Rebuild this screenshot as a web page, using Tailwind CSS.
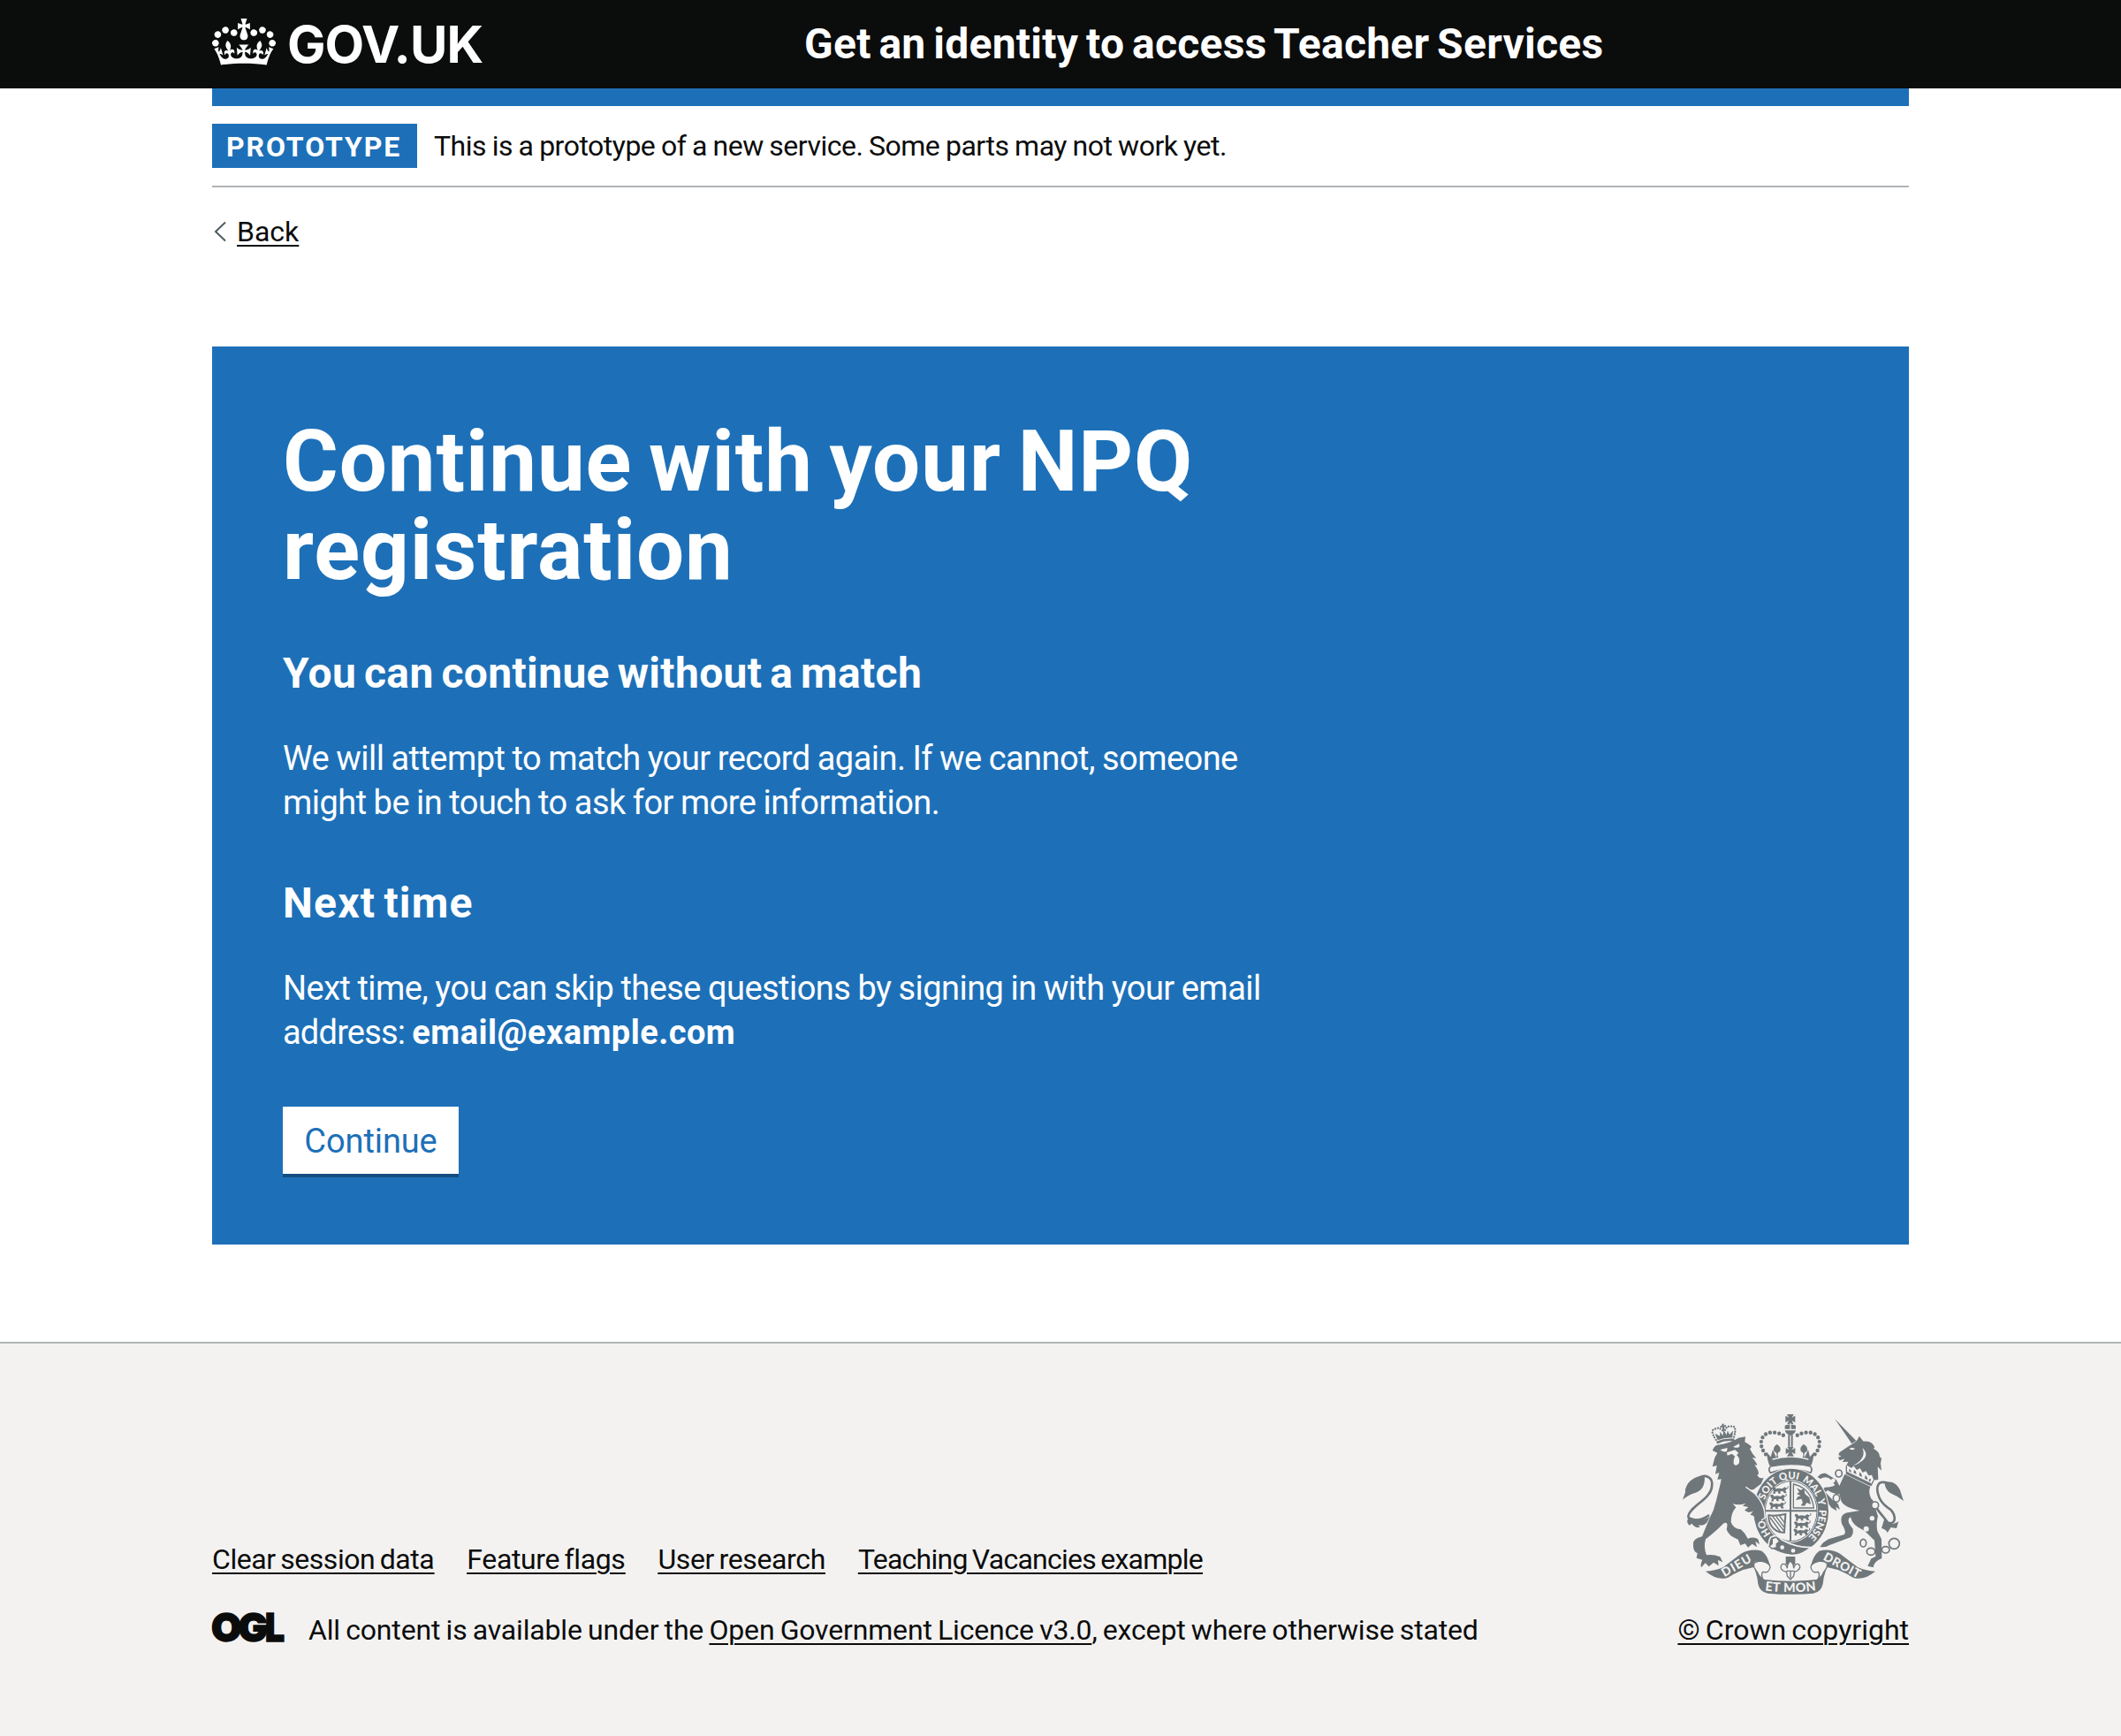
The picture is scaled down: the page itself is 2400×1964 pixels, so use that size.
<!DOCTYPE html>
<html lang="en">
<head>
<meta charset="utf-8">
<title>Get an identity to access Teacher Services</title>
<script src="https://cdn.jsdelivr.net/npm/@tailwindcss/browser@4"></script>
</head>
<body class="flex min-h-[1964px] flex-col bg-white font-[Roboto,Arial,sans-serif] text-[32px] leading-[40px] text-[#0b0c0c]">

<header class="h-[100px] bg-[#0b0c0c] text-white">
  <div class="mx-auto flex h-full w-[1920px] items-center">
    <a class="flex w-[670px] shrink-0 items-center">
      <svg class="mb-[5px] h-[53px] w-[72px]" viewBox="0 0 132 97" fill="currentColor" aria-hidden="true"><path fill-rule="evenodd" d="M25 30.2c3.5 1.5 7.7-.2 9.1-3.7 1.5-3.6-.2-7.8-3.9-9.2-3.6-1.4-7.6.3-9.1 3.9-1.4 3.5.3 7.5 3.9 9zM9 39.5c3.6 1.5 7.8-.2 9.2-3.7 1.5-3.6-.2-7.8-3.9-9.1-3.6-1.5-7.6.2-9.1 3.8-1.4 3.5.3 7.5 3.8 9zM4.4 57.2c3.5 1.5 7.7-.2 9.1-3.8 1.5-3.6-.2-7.7-3.9-9.1-3.5-1.5-7.6.3-9.1 3.8-1.4 3.5.3 7.6 3.9 9.1zm38.3-21.4c3.5 1.5 7.7-.2 9.1-3.8 1.5-3.6-.2-7.7-3.9-9.1-3.6-1.5-7.6.3-9.1 3.8-1.3 3.6.4 7.7 3.9 9.1zm64.4-5.6c-3.6 1.5-7.8-.2-9.1-3.7-1.5-3.6.2-7.8 3.8-9.2 3.6-1.4 7.7.3 9.2 3.9 1.3 3.5-.4 7.5-3.9 9zm15.9 9.3c-3.6 1.5-7.7-.2-9.1-3.7-1.5-3.6.2-7.8 3.7-9.1 3.6-1.5 7.7.2 9.2 3.8 1.5 3.5-.3 7.5-3.8 9zm4.7 17.7c-3.6 1.5-7.8-.2-9.2-3.8-1.5-3.6.2-7.7 3.9-9.1 3.6-1.5 7.7.3 9.2 3.8 1.3 3.5-.4 7.6-3.9 9.1zM89.3 35.8c-3.6 1.5-7.8-.2-9.2-3.8-1.4-3.6.2-7.7 3.9-9.1 3.6-1.5 7.7.3 9.2 3.8 1.4 3.6-.3 7.7-3.9 9.1zM69.7 17.7l8.9 4.7V9.3l-8.9 2.8c-.2-.3-.5-.6-.9-.9L72.4 0H59.6l3.5 11.2c-.3.3-.6.5-.9.9l-8.8-2.8v13.1l8.8-4.7c.3.3.6.7.9.9l-5 15.4v.1c-.2.8-.4 1.6-.4 2.4 0 4.1 3.1 7.5 7 8.1h.2c.3 0 .7.1 1 .1.4 0 .7 0 1-.1h.2c4-.6 7.1-4.1 7.1-8.1 0-.8-.1-1.7-.4-2.4V34l-5.1-15.4c.4-.2.7-.6 1-.9zM66 92.8c16.9 0 32.8 1.1 47.1 3.2 4-16.9 8.9-26.7 14-33.5l-9.6-3.4c1 4.9 1.1 7.2 0 10.2-1.5-1.4-3-4.3-4.2-8.7L108.6 76c2.8-2 5-3.2 7.5-3.3-4.4 9.4-10 11.9-13.6 11.2-4.3-.8-6.3-4.6-5.6-7.9 1-4.7 5.7-5.9 8-.5 4.3-8.7-3-11.4-7.6-8.8 7.1-7.2 7.9-13.5 2.1-21.1-8 6.1-8.1 12.3-4.5 20.8-4.7-5.4-12.1-2.5-9.5 6.2 3.4-5.2 7.9-2 7.2 3.1-.6 4.3-6.4 7.8-13.5 7.2-10.3-.9-10.9-8-11.2-13.8 2.5-.5 7.1 1.8 11 7.3L80.2 60c-4.1 4.4-8 5.3-12.3 5.4 1.4-4.4 8-11.6 8-11.6H55.5s6.4 7.2 7.9 11.6c-4.2-.1-8-1-12.3-5.4l1.4 16.4c3.9-5.5 8.5-7.7 10.9-7.3-.3 5.8-.9 12.8-11.1 13.8-7.2.6-12.9-2.9-13.5-7.2-.7-5 3.8-8.3 7.1-3.1 2.7-8.7-4.6-11.6-9.4-6.2 3.7-8.5 3.6-14.7-4.6-20.8-5.8 7.6-5 13.9 2.2 21.1-4.7-2.6-11.9.1-7.7 8.8 2.3-5.5 7.1-4.2 8.1.5.7 3.3-1.3 7.1-5.7 7.9-3.5.7-9-1.8-13.5-11.2 2.5.1 4.7 1.3 7.5 3.3l-4.7-15.4c-1.2 4.4-2.7 7.2-4.3 8.7-1.1-3-.9-5.3 0-10.2l-9.5 3.4c5 6.9 9.9 16.7 14 33.5 14.8-2.1 30.8-3.2 47.7-3.2z"/></svg>
      <span class="ml-[13px] font-[Inter,sans-serif] text-[58px] leading-[100px] font-bold tracking-[-1px]">GOV.UK</span>
    </a>
    <a class="text-[48px] leading-[100px] font-bold tracking-[0.27px] [word-spacing:-3.5px]">Get an identity to access Teacher Services</a>
  </div>
</header>

<div class="mx-auto w-[1920px]">
  <div class="h-[20px] bg-[#1d70b8]"></div>
  <div class="flex items-center border-b-2 border-[#b1b4b6] py-[20px]">
    <strong class="h-[50px] w-[232px] bg-[#1d70b8] pt-[2px] pl-[16px] leading-[48px] font-bold tracking-[1.9px] text-white">PROTOTYPE</strong>
    <span class="ml-[19px] tracking-[-0.5px] [word-spacing:-0.8px]">This is a prototype of a new service. Some parts may not work yet.</span>
  </div>
  <a class="mt-[30px] flex h-[40px] items-center">
    <svg class="ml-[2px] h-[24px] w-[14px]" viewBox="0 0 14 24" fill="none" stroke="#505a5f" stroke-width="2"><path d="M13 1.5 2 12l11 10.500"/></svg>
    <span class="ml-[12px] underline decoration-2 underline-offset-4">Back</span>
  </a>
</div>

<main class="mx-auto mt-[110px] h-[1016px] w-[1920px] bg-[#1d70b8] p-[80px] text-white">
  <h1 class="text-[96px] leading-[100px] font-bold tracking-[0.9px] [word-spacing:-6px]">Continue with your NPQ<br>registration</h1>
  <h2 class="mt-[60px] text-[48px] leading-[60px] font-bold tracking-[0.35px] [word-spacing:-3.5px]">You can continue without a match</h2>
  <p class="mt-[41px] text-[38px] leading-[50px] tracking-[-0.55px] [word-spacing:-0.8px]">We will attempt to match your record again. If we cannot, someone<br>might be in touch to ask for more information.</p>
  <h2 class="mt-[59px] text-[48px] leading-[60px] font-bold tracking-[1.2px] [word-spacing:-4px]">Next time</h2>
  <p class="mt-[41px] text-[38px] leading-[50px] tracking-[-0.55px] [word-spacing:-0.8px]">Next time, you can skip these questions by signing in with your email<br><span class="tracking-[-0.8px]">address:</span> <strong class="font-bold tracking-[0.45px]">email@example.com</strong></p>
  <button class="mt-[59px] block h-[76px] w-[199px] bg-white pt-[3px] text-center text-[38px] leading-[73px] tracking-[-0.1px] text-[#1d70b8] shadow-[0_4px_0_#144e81]">Continue</button>
</main>

<footer class="mt-[110px] grow border-t-2 border-[#b1b4b6] bg-[#f3f2f1] pt-[80px]">
  <div class="mx-auto flex w-[1920px] items-end justify-between">
    <div class="flex flex-col gap-[40px]">
      <nav class="flex gap-[37px] underline decoration-2 underline-offset-4 [word-spacing:-2px]">
        <a class="tracking-[-0.44px]">Clear session data</a>
        <a class="tracking-[-0.38px]">Feature flags</a>
        <a class="tracking-[-0.38px]">User research</a>
        <a class="tracking-[-0.75px]">Teaching Vacancies example</a>
      </nav>
      <div class="flex h-[40px] items-center">
        <svg class="mb-[6px] h-[34px] w-[82px] overflow-visible" viewBox="0 0 82 34" fill="#0b0c0c" stroke="#0b0c0c" stroke-width="1.500" font-family="Inter, sans-serif" font-weight="900" font-size="44.500"><text x="-1" y="33">O</text><text x="29.500" y="33">G</text><text x="60" y="33" textLength="22" lengthAdjust="spacingAndGlyphs">L</text></svg>
        <span class="ml-[27px] tracking-[-0.17px] [word-spacing:-1.5px]">All content is available under the <a class="underline decoration-2 underline-offset-4">Open Government Licence v3.0</a>, except where otherwise stated</span>
      </div>
    </div>
    <div class="flex flex-col items-end gap-[20px]">
      <svg class="h-[204px] w-[260px]" viewBox="60 60 780 612" fill="#6f777b" role="img" aria-label="Royal coat of arms">
        <defs>
          <path id="garter" d="M440 499A95 110 0 0 1 440 279A95 110 0 0 1 440 499"/>
          <path id="scroll" d="M335 655Q438 672 541 655"/>
          <g id="passant"><path d="M0 7Q4 0 10 4L14 9Q24 5 34 9L44 3 50 8 46 16 50 23 42 24 37 17 28 18 30 25 22 25 20 18 12 19 11 26 3 25 6 17Z"/><path d="M46 8Q58 10 54 0" fill="none" stroke="#6f777b" stroke-width="3"/></g>
        </defs>

        <!-- lion: crown, body, tail -->
        <g transform="rotate(-9 213 125)">
          <path d="M184 156Q213 148 242 156L244 148Q213 140 182 148ZM188 144L182 120 197 132 200 117 207 132 213 112 220 132 226 117 230 132 244 120 238 144Q213 138 188 144Z"/>
          <path d="M210 92h7l-1 6 7-1v7l-7-1 1 11h-8l1-11-7 1v-7l7 1z"/>
          <g fill="none" stroke="#6f777b" stroke-width="7" stroke-linecap="round" stroke-dasharray="0 9"><path d="M182 142Q165 105 185 105Q200 100 209 115"/><path d="M244 142Q261 105 241 105Q226 100 217 115"/></g>
        </g>
        <path d="M173 183Q180 165 191 164Q235 157 262 140L285 136 283 154Q299 163 306 170L300 178Q308 195 322 209L308 207Q322 222 325 233L316 232Q330 250 330 262L325 268Q333 280 347 276L338 296 322 308Q306 325 290 307Q300 330 317 338Q330 352 345 381L351 407 337 417 330 405 322 417 313 405 302 401 313 389 296 393 282 386 295 375 276 371 286 362Q264 370 242 364L253 376Q236 395 236 426Q243 448 270 451Q284 463 293 482Q315 474 328 484L333 502 319 491 324 511 308 500 294 512 284 499 268 505 260 485Q226 472 221 450Q229 421 210 431Q188 454 150 484Q142 512 153 538Q178 535 199 544L208 562 192 555 194 574 177 563 161 577 149 565 135 580Q131 569 139 554L119 548 122 532Q107 525 108 504Q105 482 138 475Q160 418 176 386Q187 352 194 320Q201 295 203 280L190 282 196 258 183 263 188 234 173 238 181 207 190 191Z"/>
        <g fill="#f3f2f1"><path d="M199 181Q212 177 224 174L222 186Q210 190 199 181ZM244 170L264 160 265 170Q254 177 244 170ZM222 190L250 181 262 192 255 198Q267 208 264 225Q253 241 245 227Q244 211 250 203L239 194 224 200Z"/></g>
        <path d="M162 402C132 425 92 424 91 406C95 374 167 348 171 306C177 268 143 263 128 278" fill="none" stroke="#6f777b" stroke-width="8"/>
        <path d="M146 267Q108 271 90 295 78 315 81 325L72 350Q93 332 116 326 151 315 146 267ZM96 409Q80 423 94 437L104 431Q112 446 131 444L125 436Q143 440 153 429L165 407Q136 426 96 409Z"/>

        <!-- central crown -->
        <path d="M426 60h23l-6 11 11-6v23l-11-6 5 11h-21l5-11-11 6V65l11 6zM419 98Q437 89 456 98V110H419ZM419 115H456Q452 130 438 130 423 130 419 115ZM430 130H446V170H430Z"/>
        <path d="M438 91v22M438 132v38" stroke="#f3f2f1" stroke-width="4"/>
        <g fill="none" stroke="#6f777b" stroke-width="13" stroke-linecap="round" stroke-dasharray="0 15.500"><path d="M354 196C323 159 341 117 383 122Q406 124 422 137"/><path d="M521 196C552 159 534 117 492 122Q469 124 453 137"/></g>
        <path d="M357 188L371 205 378 180 390 207Q395 190 383 187 376 172 392 162 409 172 402 187 390 190 397 207L424 207 434 189 422 195V175L434 181 427 171H449L442 181 454 175V195L442 189 452 207 479 207Q486 190 474 187 467 172 483 162 500 172 493 187 481 190 486 207L498 180 504 205 518 188Q515 222 507 235H368Q360 222 357 188Z"/>
        <path d="M377 213Q438 196 499 213" fill="none" stroke="#f3f2f1" stroke-width="4"/>
        <path d="M370 237Q438 221 506 237 514 248 506 259 438 235 370 259 361 248 370 237Z" fill="#f3f2f1" stroke="#6f777b" stroke-width="5"/>

        <!-- unicorn -->
        <path d="M588 75L661 150 646 160ZM646 162Q665 153 671 134L686 152Q716 148 724 174L719 176Q741 187 741 204L747 210 744 227 747 251 734 238 736 282 719 284 626 237 634 221 614 222 622 211 605 217 600 206 611 202 601 199 604 190 635 169Z"/>
        <path d="M637 176Q647 172 657 176 650 185 637 176ZM682 174Q698 210 648 236 669 230 683 217 706 196 682 174ZM630 233L644 242 653 236 663 249 674 243 683 258 694 253 703 268 714 266 722 287 711 306 625 262Z" fill="#f3f2f1"/>
        <path d="M629 254L713 295 709 304 626 263Z"/>
        <path d="M628 236V260M720 284L711 303" fill="none" stroke="#6f777b" stroke-width="4"/>
        <path d="M637 245l5 4 3 8-8-3zM654 248l6 6 2 10-10-5zM673 256l6 7 2 10-10-5zM692 266l6 7 2 10-10-5zM707 278l5 3-4 8-5-3z"/>
        <path d="M622 263L709 306Q700 325 714 350L728 385 735 406Q728 433 733 457L747 484 748 549Q720 560 719 580L700 575 712 550 727 543 723 488 689 455Q647 438 642 409 624 420 650 449 653 474 637 479L569 505Q560 513 538 510L549 496 567 484 621 468Q629 459 612 431 604 399 632 394L673 387Q620 376 610 354L604 331Q581 330 565 318L556 324 581 351 599 364 606 384 592 374 595 388 577 377 558 351 545 317 555 308Q579 308 589 301L578 284Q560 267 540 279L530 274Q538 259 557 260L594 283 604 303Z"/>
        <path d="M711 350Q737 391 770 429C803 435 795 392 767 376C733 352 721 300 746 291Q765 289 777 299" fill="none" stroke="#6f777b" stroke-width="8"/>
        <path d="M757 292Q792 281 809 315L822 354Q800 337 776 327 760 317 757 292ZM757 414Q776 445 805 424L798 447 779 444 767 462Q763 451 747 447Z"/>
        <g fill="#f3f2f1"><circle cx="715" cy="413" r="8"/><circle cx="695" cy="449" r="9"/><circle cx="583" cy="285" r="7"/></g>
        <g fill="#f3f2f1" stroke="#6f777b" stroke-width="5"><ellipse cx="602" cy="261" rx="11" ry="12"/><ellipse cx="594" cy="345" rx="11" ry="13"/><circle cx="725" cy="369" r="12"/><ellipse cx="685" cy="497" rx="10" ry="13"/><ellipse cx="711" cy="526" rx="14" ry="12"/><ellipse cx="761" cy="520" rx="13" ry="11"/><circle cx="790" cy="499" r="18"/></g>

        <!-- garter and shield -->
        <ellipse cx="440" cy="389" rx="130" ry="147" fill="#f3f2f1"/>
        <ellipse cx="440" cy="389" rx="127" ry="144"/>
        <ellipse cx="440" cy="389" rx="91" ry="106" fill="#f3f2f1"/>
        <ellipse cx="440" cy="389" rx="88" ry="102" fill="none" stroke="#6f777b" stroke-width="3"/>
        <g fill="#f3f2f1" font-family="Lato, sans-serif" font-weight="900" font-size="34">
          <text><textPath href="#garter" startOffset="78">HO</textPath></text>
          <text><textPath href="#garter" startOffset="199">SOIT</textPath></text>
          <text><textPath href="#garter" startOffset="284">QUI</textPath></text>
          <text><textPath href="#garter" startOffset="360">MAL</textPath></text>
          <text><textPath href="#garter" startOffset="443">Y</textPath></text>
          <text><textPath href="#garter" startOffset="478" textLength="102">PENSE</textPath></text>
        </g>
        <path d="M438 286V490M352 388H528" fill="none" stroke="#6f777b" stroke-width="6"/>
        <g><use href="#passant" x="375" y="304"/><use href="#passant" x="369" y="330"/><use href="#passant" x="366" y="356"/><use href="#passant" x="452" y="396"/><use href="#passant" x="450" y="421"/><use href="#passant" x="448" y="446"/></g>
        <path d="M448 378V297Q508 310 517 378Z" fill="none" stroke="#6f777b" stroke-width="4"/>
        <path d="M459 310L473 317 484 312 487 330 502 343 507 366 493 360 486 371 473 370 480 360 475 347 456 352 463 340 473 337 459 330 468 325Z"/>
        <path d="M364 403Q384 407 421 399L417 461Q392 463 376 443 363 426 364 403Z" fill="none" stroke="#6f777b" stroke-width="6"/>
        <path d="M377 406L415 455M389 406L416 443M401 405L417 427M369 411L404 459" stroke="#6f777b" stroke-width="4"/>
        <!-- lion's forearm over the garter -->
        <path d="M286 307L318 330Q343 358 348 386L350 411 338 418 331 406 321 416 311 403 302 401 311 389 296 375Z"/>
        <path d="M286 307L318 330Q343 358 349 386L352 411 339 420" fill="none" stroke="#f3f2f1" stroke-width="4"/>
        <!-- buckle and strap -->
        <path d="M370 478Q390 465 407 485 455 513 508 512 470 543 436 538 400 533 378 519 354 512 370 478Z" stroke="#f3f2f1" stroke-width="5"/>
        <path d="M376 482L390 477 401 492 391 500 390 513 375 516 366 508 376 499Z" fill="#f3f2f1" stroke="#6f777b" stroke-width="4"/>
        <g fill="#f3f2f1"><circle cx="410" cy="512" r="7"/><circle cx="447" cy="523" r="7"/></g>
        <path d="M422 543H454V570H422Z"/>
        <path d="M438 557Q450 569 449 583 453 564 466 569 476 581 461 591L451 596 449 609 438 621 427 609 425 596 413 591Q399 581 410 569 423 564 427 583 426 569 438 557ZM424 592H452M438 592V615" fill="#f3f2f1" stroke="#6f777b" stroke-width="4"/>

        <!-- motto scroll -->
        <g>
          <path d="M150 593Q180 592 210 579L270 533Q305 514 341 524 362 540 369 577 357 559 324 558 309 562 314 579 270 586 226 614 190 627 150 593Z"/>
          <path d="M726 593Q696 592 666 579L606 533Q571 514 535 524 514 540 507 577 519 559 552 558 567 562 562 579 606 586 650 614 686 627 726 593Z"/>
          <path d="M338 558Q369 563 369 579 365 601 345 595 336 601 345 622M338 558Q305 560 316 582L329 602M538 558Q507 563 507 579 511 601 531 595 540 601 531 622M538 558Q571 560 560 582L547 602" fill="none" stroke="#6f777b" stroke-width="4"/>
          <path d="M313 578Q324 600 349 621 438 631 527 621 552 600 563 578 551 604 548 636 542 664 515 668 438 675 361 668 334 664 328 636 325 604 313 578Z"/>
        </g>
        <g fill="#f3f2f1" font-family="Lato, sans-serif" font-weight="900" font-size="41">
          <text transform="translate(214 613) rotate(-30)" textLength="109">DIEU</text>
          <text transform="translate(547 553) rotate(28)" textLength="136">DROIT</text>
          <text text-anchor="middle" font-size="43"><textPath href="#scroll" startOffset="50%" textLength="174">ET MON</textPath></text>
        </g>
      </svg>
      <a class="underline decoration-2 underline-offset-4 [word-spacing:-1.7px]">© Crown copyright</a>
    </div>
  </div>
</footer>
</body>
</html>
